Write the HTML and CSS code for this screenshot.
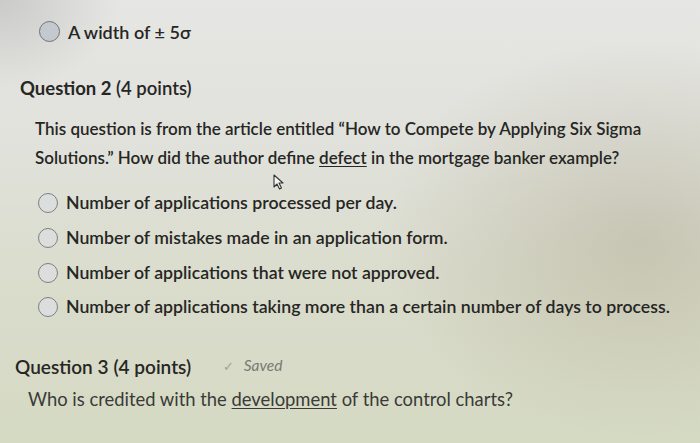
FILE: index.html
```html
<!DOCTYPE html>
<html>
<head>
<meta charset="utf-8">
<link rel="stylesheet" href="styles.css">
</head>
<body>
<div class="page">
  <div class="opt opt-top">
    <span class="radio radio-filled"></span>
    <span class="opt-text">A width of ± 5σ</span>
  </div>

  <div class="question q2">
    <div class="q-title"><span class="q-num">Question 2</span> <span class="q-pts">(4 points)</span></div>
    <p class="q-body">This question is from the article entitled “How to Compete by Applying Six Sigma Solutions.” How did the author define <u>defect</u> in the mortgage banker example?</p>
    <div class="cursor-row">
      <svg class="cursor" width="14" height="16" viewBox="0 0 14 16"><path d="M2 1 L2 13 L5 10 L7.5 15 L9.5 14 L7 9 L11 9 Z" fill="#f4f4f0" stroke="#333" stroke-width="1.1" stroke-linejoin="round"/></svg>
    </div>
    <div class="options">
      <div class="opt"><span class="radio"></span><span class="opt-text">Number of applications processed per day.</span></div>
      <div class="opt"><span class="radio"></span><span class="opt-text">Number of mistakes made in an application form.</span></div>
      <div class="opt"><span class="radio"></span><span class="opt-text">Number of applications that were not approved.</span></div>
      <div class="opt"><span class="radio"></span><span class="opt-text">Number of applications taking more than a certain number of days to process.</span></div>
    </div>
  </div>

  <div class="question q3">
    <div class="q-title"><span class="q-num">Question 3</span> <span class="q-pts">(4 points)</span><span class="saved"><span class="check">✓</span> Saved</span></div>
    <p class="q-body">Who is credited with the <u>development</u> of the control charts?</p>
  </div>
</div>
</body>
</html>
```

FILE: styles.css
```css
html, body {
  margin: 0;
  padding: 0;
}
body {
  width: 700px;
  height: 443px;
  overflow: hidden;
  font-family: Lato, "Open Sans", sans-serif;
  color: #262624;
  background:
    radial-gradient(ellipse 260px 200px at 640px 240px, rgba(150,140,110,0.3), rgba(150,140,110,0) 100%),
    radial-gradient(ellipse 120px 90px at 0px 0px, rgba(120,120,120,0.25), rgba(120,120,120,0) 100%),
    linear-gradient(180deg, #e6e6e4 0%, #e1e2dc 30%, #dadccc 65%, #d5dac3 100%);
}
.page {
  padding-top: 21px;
}
.opt {
  display: flex;
  align-items: center;
  gap: 8px;
  font-size: 17.7px;
  line-height: 20px;
}
.opt-top {
  margin-left: 39px;
  font-size: 18px;
}
.radio {
  box-sizing: border-box;
  width: 20px;
  height: 20px;
  border: 1.5px solid #7d7f80;
  border-radius: 50%;
  background: #dcdedd;
  flex: none;
}
.radio-filled {
  width: 21px;
  height: 21px;
  background: #c3c9cf;
  border-color: #6f7377;
}
.opt-text {
  font-weight: 600;
}
.q2 {
  margin-top: 36px;
}
.q-title {
  font-size: 18.5px;
  line-height: 20px;
  font-weight: 700;
}
.q2 .q-title {
  margin-left: 20px;
}
.q-pts {
  font-weight: 600;
}
.q-body {
  margin: 0;
  font-size: 17px;
  line-height: 29px;
  font-weight: 600;
}
.q2 .q-body {
  margin-top: 16px;
  margin-left: 35px;
  width: 640px;
}
.cursor-row {
  height: 16px;
  padding-left: 272px;
  padding-top: 2px;
}
.cursor {
  display: block;
}
.options {
  margin-left: 38px;
  margin-top: 3px;
  display: flex;
  flex-direction: column;
  gap: 14.8px;
}
.q3 {
  margin-top: 40px;
}
.q3 .q-title {
  margin-left: 15px;
  font-size: 19px;
  font-weight: 600;
  display: flex;
  align-items: baseline;
}
.q3 .q-num {
  margin-right: 5px;
}
.saved {
  margin-left: 32px;
  font-size: 15.5px;
  font-style: italic;
  font-weight: 400;
  color: #777a72;
  position: relative;
  top: -3px;
}
.check {
  color: #9aa88f;
  font-style: normal;
  font-size: 13px;
  margin-right: 6px;
}
.q3 .q-body {
  margin-top: 6px;
  margin-left: 28px;
  font-size: 18.4px;
  font-weight: 400;
  color: #3a3a38;
}
u {
  text-underline-offset: 2px;
}
```
